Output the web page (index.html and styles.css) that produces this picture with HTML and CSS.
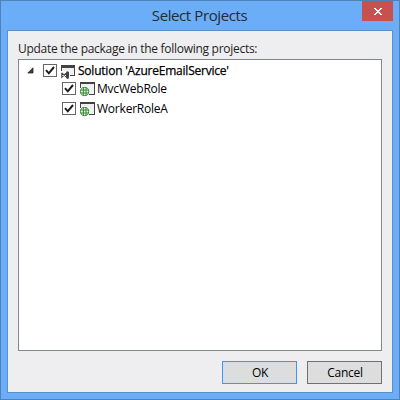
FILE: index.html
```
<!DOCTYPE html>
<html lang="en">
<head>
<meta charset="utf-8">
<title>Select Projects</title>
<link rel="stylesheet" href="styles.css">
</head>
<body>
<svg class="defs" width="0" height="0" aria-hidden="true">
  <symbol id="check" viewBox="0 0 14 13">
    <rect x=".5" y=".5" width="13" height="12" fill="#fff" stroke="#666"/>
    <path d="M3 6.2 5.8 9.3 11 3" fill="none" stroke="#1c1c1c" stroke-width="2"/>
  </symbol>
  <symbol id="web" viewBox="0 0 16 16">
    <path d="M0 1h15v2H0z" fill="#424242"/>
    <path d="M1 3h13v10H1z" fill="#f0eff1"/>
    <path d="M0 3h1v4H0zM14 3h1v11H9v-1h5z" fill="#424242"/>
    <circle cx="4.6" cy="10.5" r="5" fill="#f6f6f6"/>
    <circle cx="4.6" cy="10.5" r="4.1" fill="#e5f1e5" stroke="#388a34"/>
    <path d="M.7 9h8M.7 12h8M3.4 6.5v8M6 6.5v8" stroke="#388a34" fill="none"/>
  </symbol>
</svg>
<div class="window">
  <header class="titlebar">
    <h1 class="title">Select Projects</h1>
    <button class="close" aria-label="Close"><svg width="8" height="7" viewBox="0 0 8 7" shape-rendering="crispEdges"><path fill="#fff" d="M0 0h2v1h1v1h2V1h1V0h2v1H7v1H6v1H5v1h1v1h1v1h1v1H6V6H5V5H3v1H2v1H0V6h1V5h1V4h1V3H2V2H1V1H0z"/></svg></button>
  </header>
  <main class="client">
    <p class="prompt">Update the package in the following projects:</p>
    <div class="tree">
      <div class="row root">
        <svg class="arrow" width="7" height="7" viewBox="0 0 7 7"><path d="M6 .8V6H.8z" fill="#404040" stroke="#262626" stroke-width=".8"/></svg>
        <svg class="box" width="14" height="13"><use href="#check"/></svg>
        <svg class="icon" width="16" height="16" viewBox="0 0 16 16">
          <path d="M0 2h14v3H0z" fill="#424242"/>
          <path d="M1 5h12v7H1z" fill="#f0eff1"/>
          <path d="M0 5h1v3H0zM13 5h1v8H9v-1h4z" fill="#424242"/>
          <path d="M0 8h8.5v8H0z" fill="#fff"/>
          <path d="M.8 9.8v4.4L5.7 9.8v4.5L.8 10" fill="none" stroke="#424242" stroke-width="1.1"/>
          <path d="M5.4 8.8 6.5 8.2 8 8.9v6.3l-1.5.7-1.1-.6z" fill="#424242"/>
        </svg>
        <span class="label solution">Solution 'AzureEmailService'</span>
      </div>
      <div class="row child">
        <svg class="box" width="14" height="13"><use href="#check"/></svg>
        <svg class="icon" width="16" height="16"><use href="#web"/></svg>
        <span class="label mvc">MvcWebRole</span>
      </div>
      <div class="row child">
        <svg class="box" width="14" height="13"><use href="#check"/></svg>
        <svg class="icon" width="16" height="16"><use href="#web"/></svg>
        <span class="label worker">WorkerRoleA</span>
      </div>
    </div>
    <footer class="actions">
      <button class="btn default">OK</button>
      <button class="btn">Cancel</button>
    </footer>
  </main>
</div>
</body>
</html>
```
FILE: styles.css
```
* { box-sizing: border-box; }
body { margin: 0; font: 12px/16px "Open Sans", "Noto Sans", sans-serif; color: #1e1e1e; }
.defs { position: absolute; }
svg { display: block; flex: none; }
.window {
  width: 400px; height: 400px; padding: 0 6px 6px;
  display: flex; flex-direction: column;
  background: #6badf6; border: 1px solid #4e82b9;
}
.titlebar { height: 29px; flex: none; display: grid; grid-template-columns: 30px 1fr 31px; }
.title { grid-column: 2; margin: 0; text-align: center; font-size: 15px; line-height: 29px; font-weight: 400; letter-spacing: -.4px; color: #222b36; }
.close { width: 31px; height: 20px; padding: 0; border: 0; background: #c75050; display: grid; place-items: center; }
.client {
  flex: 1; padding: 10px 10px 8px;
  display: flex; flex-direction: column;
  background: #eeeef0; border: 1px solid #5b8fca;
}
.prompt { margin: 0; height: 18px; line-height: 16px; letter-spacing: -.28px; white-space: nowrap; }
.tree { height: 292px; flex: none; border: 1px solid #828790; background: #fff; color: #000; }
.row { display: flex; align-items: center; }
.root { height: 21px; padding-left: 8px; margin-bottom: 1px; }
.arrow { margin-right: 9px; }
.child { height: 13px; padding-left: 43px; }
.child + .child { margin-top: 7px; }
.icon { margin: 0 1px 0 4px; }
.child .label { line-height: 13px; }
.label { white-space: nowrap; letter-spacing: -.22px; }
.solution { -webkit-text-stroke: .25px #000; letter-spacing: -.22px; }
.actions { margin-top: 10px; display: flex; justify-content: flex-end; gap: 10px; }
.btn { width: 75px; height: 23px; padding: 0 0 0 1px; font: inherit; letter-spacing: -.3px; color: #000; background: #ddd; border: 1px solid #707070; }
.default { border-color: #3399ff; }
```
